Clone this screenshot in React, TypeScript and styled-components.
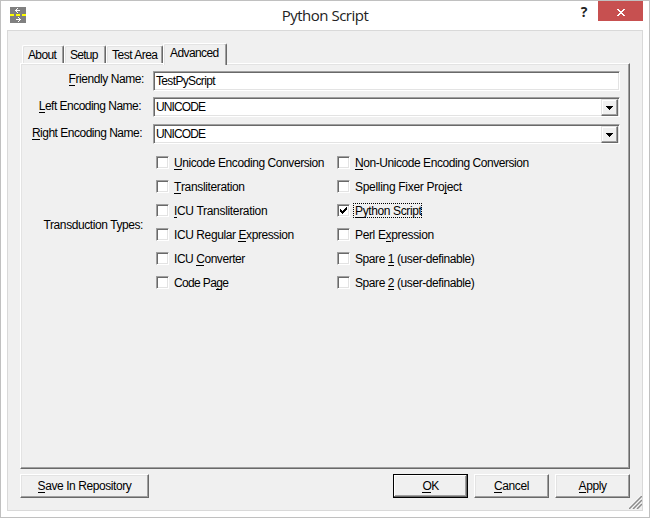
import React from "react";
import styled, { createGlobalStyle, css } from "styled-components";

const GlobalStyle = createGlobalStyle`
  * { box-sizing: border-box; }
  body { margin: 0; overflow: hidden; }
`;

const raised = css`
  border: 1px solid;
  border-color: #ffffff #696969 #696969 #ffffff;
  box-shadow: inset -1px -1px #a0a0a0, inset 1px 1px #e3e3e3;
`;

const sunken = css`
  border: 1px solid;
  border-color: #a0a0a0 #ffffff #ffffff #a0a0a0;
  box-shadow: inset 1px 1px #696969, inset -1px -1px #e3e3e3;
`;

const Window = styled.div`
  width: 650px;
  height: 518px;
  border: 1px solid #c0c0c0;
  background: #fff;
  padding: 0 6px 6px;
  display: flex;
  flex-direction: column;
  font: 12px/13px "Liberation Sans", Arial, sans-serif;
  color: #000;
  white-space: nowrap;
`;

const TitleBar = styled.header`
  height: 29px;
  flex: none;
  display: grid;
  grid-template-columns: 64px 1fr 64px;
`;

const AppIcon = styled.svg`
  margin: 6px 0 0 3px;
`;

const Title = styled.h1`
  margin: 0;
  padding: 4px 0 0;
  text-align: center;
  font: 15px/20px "Open Sans", "Noto Sans", sans-serif;
  letter-spacing: -0.5px;
  color: #222;
`;

const WindowButtons = styled.div`
  display: flex;
  justify-content: flex-end;
  gap: 10px;
`;

const HelpButton = styled.button`
  border: 0;
  padding: 1px 0 0;
  background: none;
  width: 8px;
  height: 20px;
  font: bold 14px/18px "Open Sans", sans-serif;
  color: #222;
`;

const CloseButton = styled.button`
  border: 0;
  padding: 2px 0 0;
  background: #c75050;
  width: 45px;
  height: 20px;
  flex: none;
  display: flex;
  align-items: center;
  justify-content: center;
`;

const Client = styled.main`
  position: relative;
  flex: 1;
  border: 1px solid #d9d9d9;
  background: #f0f0f0;
  padding: 12px 12px 0;
  display: flex;
  flex-direction: column;
`;

const Tabs = styled.nav`
  height: 20px;
  flex: none;
  display: flex;
  align-items: flex-end;
  padding-left: 2px;
`;

const Tab = styled.div<{ $w: number; $active?: boolean }>`
  width: ${(p) => p.$w}px;
  height: ${(p) => (p.$active ? 22 : 18)}px;
  margin-bottom: ${(p) => (p.$active ? -2 : 0)}px;
  z-index: ${(p) => (p.$active ? 1 : 0)};
  position: relative;
  background: #f0f0f0;
  border: 1px solid;
  border-color: #fff #696969 transparent #fff;
  border-bottom: 0;
  border-radius: 2px 2px 0 0;
  box-shadow: inset -1px 0 #a0a0a0, inset 1px 1px #e3e3e3;
  padding: ${(p) => (p.$active ? "3px 0 0 6px" : "3px 0 0 5px")};
`;

const Panel = styled.section`
  ${raised}
  height: 406px;
  flex: none;
  padding: 7px 9px 0 10px;
`;

const Field = styled.div<{ $gap: number }>`
  display: grid;
  grid-template-columns: 122px 467px;
  margin-bottom: ${(p) => p.$gap}px;
`;

const Label = styled.label<{ $end: number; $top?: number }>`
  text-align: right;
  padding: ${(p) => p.$top ?? 3}px ${(p) => p.$end}px 0 0;
`;

const Text = styled.span<{ $ls?: number }>`
  letter-spacing: ${(p) => p.$ls ?? -0.42}px;
  u {
    text-decoration: none;
    box-shadow: 0 1px #000;
    display: inline-block;
    height: 12px;
    line-height: 13px;
  }
`;

const Input = styled.div`
  ${sunken}
  height: 20px;
  background: #fff;
  display: flex;
  justify-content: space-between;
  padding: 1px;
`;

const Value = styled.span`
  padding: 2px 0 0 1px;
`;

const DropButton = styled.button`
  ${raised}
  border-left-color: #e3e3e3;
  border-top-color: #e3e3e3;
  box-shadow: inset -1px -1px #a0a0a0, inset 1px 1px #fff;
  width: 17px;
  height: 17px;
  padding: 1px 0 0;
  background: #f0f0f0;
  display: flex;
  align-items: center;
  justify-content: center;
`;

const Checks = styled.div`
  display: grid;
  grid-template-columns: 181px 1fr;
  grid-auto-rows: 24px;
  padding-left: 3px;
`;

const CheckRow = styled.div`
  display: flex;
  gap: 3px;
`;

const Box = styled.span`
  ${sunken}
  width: 13px;
  height: 13px;
  flex: none;
  background: #fff;
  display: flex;
  svg { margin: 1px; flex: none; }
`;

const CheckText = styled.span<{ $focus?: boolean }>`
  height: 15px;
  margin-top: -1px;
  padding: 1px 0 0 1px;
  border: 1px dotted ${(p) => (p.$focus ? "#000" : "transparent")};
`;

const Footer = styled.footer`
  display: flex;
  gap: 6px;
  padding-top: 5px;
`;

const Button = styled.button<{ $w: number; $default?: boolean }>`
  ${raised}
  width: ${(p) => p.$w}px;
  height: 24px;
  padding: 0;
  background: #f0f0f0;
  font: inherit;
  color: #000;
  ${(p) =>
    p.$default &&
    css`
      border-color: #000;
      box-shadow: inset -1px -1px #696969, inset 1px 1px #fff, inset -2px -2px #a0a0a0;
    `}
  &:first-child { margin-right: auto; }
`;

const Grip = styled.svg`
  position: absolute;
  right: 0;
  bottom: 1px;
`;

type Item = { pre?: string; key: string; post: string; ls?: number; on?: boolean };

const Mnemonic = ({ pre = "", key_, post, ls }: { pre?: string; key_: string; post: string; ls?: number }) => (
  <Text $ls={ls}>{pre}<u>{key_}</u>{post}</Text>
);

const items: Item[] = [
  { key: "U", post: "nicode Encoding Conversion" },
  { key: "N", post: "on-Unicode Encoding Conversion", ls: -0.44 },
  { key: "T", post: "ransliteration", ls: -0.36 },
  { pre: "Spelling Fixer Pro", key: "j", post: "ect", ls: -0.3 },
  { key: "I", post: "CU Transliteration", ls: -0.32 },
  { key: "P", post: "ython Script", ls: -0.38, on: true },
  { pre: "ICU Regular ", key: "E", post: "xpression", ls: -0.41 },
  { pre: "Perl E", key: "x", post: "pression", ls: -0.35 },
  { pre: "ICU ", key: "C", post: "onverter", ls: -0.45 },
  { pre: "Spare ", key: "1", post: " (user-definable)" },
  { pre: "Code Pa", key: "g", post: "e", ls: -0.65 },
  { pre: "Spare ", key: "2", post: " (user-definable)" },
];

const Arrow = () => (
  <svg width="7" height="4" shapeRendering="crispEdges"><path d="M0 0h7v1h-1v1h-1v1h-1v1h-1v-1h-1v-1h-1v-1h-1z" /></svg>
);

export default function App() {
  return (
    <>
      <GlobalStyle />
      <Window>
        <TitleBar>
          <AppIcon width="16" height="16" shapeRendering="crispEdges">
            <path fill="#808080" d="M0 0h16v16H0z" />
            <path fill="#ff0" d="M0 7h4v2H0zM6 7h4v2H6zM12 7h4v2h-4z" />
            <path fill="#fff" d="M5 3h5v1H5zM6 2h1v3H6zM7 1h1v1H7zM7 5h1v1H7zM6 12h5v1H6zM9 11h1v3H9zM8 10h1v1H8zM8 14h1v1H8z" />
          </AppIcon>
          <Title>Python Script</Title>
          <WindowButtons>
            <HelpButton>?</HelpButton>
            <CloseButton>
              <svg width="8" height="7" shapeRendering="crispEdges" fill="#fff"><path d="M0 0h2v1h1v1h2V1h1V0h2v1h-1v1h-1v1h-1v1h1v1h1v1h1v1h-2v-1h-1v-1h-2v1h-1v1h-2v-1h1v-1h1v-1h1v-1h-1v-1h-1v-1h-1z" /></svg>
            </CloseButton>
          </WindowButtons>
        </TitleBar>
        <Client>
          <Tabs>
            <Tab $w={42}><Text $ls={-0.65}>About</Text></Tab>
            <Tab $w={42}><Text $ls={-0.75}>Setup</Text></Tab>
            <Tab $w={57}><Text $ls={-0.5}>Test Area</Text></Tab>
            <Tab $w={64} $active><Text $ls={-0.6}>Advanced</Text></Tab>
          </Tabs>
          <Panel>
            <Field $gap={6}>
              <Label $end={9} $top={2}><Mnemonic key_="F" post="riendly Name:" /></Label>
              <Input><Value><Text $ls={-0.65}>TestPyScript</Text></Value></Input>
            </Field>
            <Field $gap={7}>
              <Label $end={12}><Mnemonic key_="L" post="eft Encoding Name:" ls={-0.52} /></Label>
              <Input><Value><Text $ls={-0.9}>UNICODE</Text></Value><DropButton><Arrow /></DropButton></Input>
            </Field>
            <Field $gap={12}>
              <Label $end={11}><Mnemonic key_="R" post="ight Encoding Name:" ls={-0.5} /></Label>
              <Input><Value><Text $ls={-0.9}>UNICODE</Text></Value><DropButton><Arrow /></DropButton></Input>
            </Field>
            <Field $gap={0}>
              <Label $end={10} $top={63}><Text>Transduction Types:</Text></Label>
              <Checks>
                {items.map((i) => (
                  <CheckRow key={(i.pre ?? "") + i.key + i.post}>
                    <Box>
                      {i.on && (
                        <svg width="9" height="9" shapeRendering="crispEdges"><path d="M1 3h1v1h1v1h1v-1h1v-1h1v-1h1v-1h1v3h-1v1h-1v1h-1v1h-1v1h-1v-1h-1v-1h-1z" /></svg>
                      )}
                    </Box>
                    <CheckText $focus={i.on}><Mnemonic pre={i.pre} key_={i.key} post={i.post} ls={i.ls} /></CheckText>
                  </CheckRow>
                ))}
              </Checks>
            </Field>
          </Panel>
          <Footer>
            <Button $w={129}><Mnemonic key_="S" post="ave In Repository" /></Button>
            <Button $w={75} $default><Mnemonic key_="O" post="K" ls={-0.6} /></Button>
            <Button $w={75}><Mnemonic key_="C" post="ancel" /></Button>
            <Button $w={75}><Mnemonic key_="A" post="pply" /></Button>
          </Footer>
          <Grip width="13" height="13" fill="none">
            <path stroke="#fff" d="M-1.5 13L13 -1.5M2.5 13L13 2.5M6.5 13L13 6.5" />
            <path stroke="#8c8c8c" strokeWidth="1.5" d="M0 13L13 0M4 13L13 4M8 13L13 8" />
          </Grip>
        </Client>
      </Window>
    </>
  );
}
